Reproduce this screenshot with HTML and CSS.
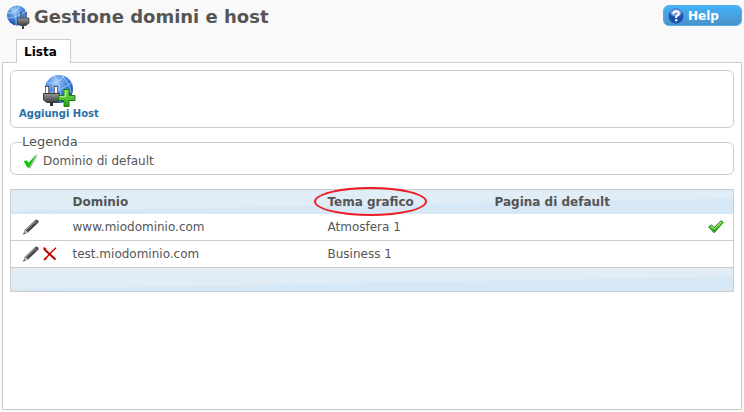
FILE: index.html
```html
<!DOCTYPE html>
<html lang="it">
<head>
  <meta charset="UTF-8">
  <title>Gestione domini e host</title>
  <meta name="viewport" content="width=device-width, initial-scale=1">
  <link rel="stylesheet" href="styles.css">
</head>
<body>
  <svg class="defs" width="0" height="0" aria-hidden="true">
    <defs>
      <radialGradient id="globe" cx="40%" cy="25%" r="80%">
        <stop offset="0" stop-color="#a9d0f8"/>
        <stop offset="0.45" stop-color="#4a8be0"/>
        <stop offset="1" stop-color="#123f98"/>
      </radialGradient>
      <linearGradient id="plug" x1="0" y1="0" x2="0" y2="1">
        <stop offset="0" stop-color="#989898"/>
        <stop offset="1" stop-color="#3c3c3c"/>
      </linearGradient>
      <linearGradient id="green" x1="0" y1="0" x2="0" y2="1">
        <stop offset="0" stop-color="#8be85c"/>
        <stop offset="1" stop-color="#1f9c12"/>
      </linearGradient>
      <linearGradient id="pen" x1="0" y1="0" x2="1" y2="1">
        <stop offset="0.3" stop-color="#8c8c8c"/>
        <stop offset="0.6" stop-color="#333"/>
      </linearGradient>
      <symbol id="icon-edit" viewBox="0 0 16 16">
        <path d="M0.3 15.4 L1.8 10.8 L11.5 1.4 Q13 0 14.8 1 Q16.2 2.2 15 4 L5.2 13.2 Z" fill="url(#pen)"/>
        <path d="M0.3 15.4 L1.8 10.8 L5.2 13.2 Z" fill="#b9b9b9"/>
        <path d="M0.3 15.4 L1 13.3 L2.4 14.5 Z" fill="#444"/>
        <path d="M3 11 L11.8 2.6" stroke="#bbb" stroke-width="0.8"/>
        <path d="M11 2.2 L14 4.8" stroke="#999" stroke-width="0.7"/>
      </symbol>
    </defs>
  </svg>

  <header class="header">
    <svg class="header-icon" width="24" height="24" viewBox="0 0 24 24" aria-hidden="true">
      <circle cx="10" cy="10.5" r="10" fill="url(#globe)"/>
      <path d="M1 8 Q8 9 13 1 M1 13 Q9 13 19 6 M4 3 Q10 10 9 20" fill="none" stroke="#c4e0fb" stroke-width="0.7"/>
      <path d="M14 8 V14 M19 7 V14" stroke="#c9dcf2" stroke-width="2.4"/>
      <path d="M14 7 V14 M19 7 V14" stroke="#1d3966" stroke-width="1.3"/>
      <path d="M10.5 13 H22 V18 L19 20.5 H13 L10.5 18 Z" fill="url(#plug)" stroke="#444" stroke-width="0.8"/>
      <path d="M16 20 V24" stroke="#444" stroke-width="2"/>
    </svg>
    <h1>Gestione domini e host</h1>
    <button class="help" type="button">
      <svg width="16" height="16" viewBox="0 0 16 16" aria-hidden="true">
        <circle cx="8" cy="8" r="7.5" fill="#1c50ae"/>
        <ellipse cx="8" cy="4.8" rx="5.8" ry="3.8" fill="#6f9be0"/>
        <path d="M5.3 6 Q5.5 3.3 8.2 3.3 Q11 3.5 10.8 5.8 Q10.6 7.2 8.2 8.3 V10" fill="none" stroke="#fff" stroke-width="2"/>
        <circle cx="8.2" cy="12.2" r="1.2" fill="#fff"/>
      </svg>
      Help
    </button>
  </header>

  <nav class="tabs">
    <a class="tab" href="#lista">Lista</a>
  </nav>

  <main class="panel" id="lista">
    <div class="toolbar">
      <a class="tool" href="#aggiungi">
        <svg width="34" height="34" viewBox="0 0 34 34" aria-hidden="true">
          <circle cx="17" cy="15" r="14" fill="url(#globe)"/>
          <path d="M5 9 Q16 11 22 2 M8 19 Q19 16 30 9 M12 2 Q20 11 18 28 M19 1 Q28 9 29 19" fill="none" stroke="#b9dafa" stroke-width="0.7"/>
          <path d="M5 12 V20 M14 12 V20" stroke="#555" stroke-width="4"/>
          <path d="M5 13 V20 M14 13 V20" stroke="#fff" stroke-width="2.4"/>
          <path d="M1.5 19.5 H17.5 V26 L14 28.5 H5 L1.5 26 Z" fill="url(#plug)" stroke="#3b3b3b"/>
          <path d="M9.5 28 V32" stroke="#333" stroke-width="3"/>
          <path d="M22 15.5 H27 V21.5 H33 V26.5 H27 V32.5 H22 V26.5 H16.5 V21.5 H22 Z" fill="url(#green)" stroke="#178310"/>
          <path d="M23.3 17 V22.8 H18" fill="none" stroke="#b9f596"/>
        </svg>
        Aggiungi Host
      </a>
    </div>

    <fieldset class="legend">
      <legend>Legenda</legend>
      <svg width="16" height="16" viewBox="0 0 16 16" aria-hidden="true">
        <path d="M2.2 9.2 L6 12.3 L14.2 2.6 L6.8 15.4 Z" fill="#aaa" stroke="#bbb"/>
        <path d="M0.8 8 L4 7.4 L5.6 9.8 L14 0.8 L6 14.4 H4.2 Z" fill="#0bc80b"/>
      </svg>
      <span class="legend-text">Dominio di default</span>
    </fieldset>

    <table class="grid">
      <colgroup>
        <col class="col-actions">
        <col class="col-domain">
        <col class="col-theme">
        <col>
        <col class="col-default">
      </colgroup>
      <thead>
        <tr>
          <th></th>
          <th>Dominio</th>
          <th><span class="marked">Tema grafico</span></th>
          <th>Pagina di default</th>
          <th></th>
        </tr>
      </thead>
      <tbody>
        <tr>
          <td>
            <div class="actions">
              <button type="button" aria-label="Modifica"><svg width="16" height="16"><use href="#icon-edit"/></svg></button>
            </div>
          </td>
          <td>www.miodominio.com</td>
          <td>Atmosfera 1</td>
          <td></td>
          <td>
            <svg class="check" width="16" height="14" viewBox="0 0 16 14" role="img" aria-label="Dominio di default">
              <path d="M0.7 7 L3.4 4.8 L6 7.6 L13 0.8 L15.3 2.4 L6.2 12.8 Z" fill="url(#green)" stroke="#267c20"/>
              <path d="M2.4 6.8 L3.5 6 L6 9 L13 2" fill="none" stroke="#a7f488" stroke-width="0.8"/>
            </svg>
          </td>
        </tr>
        <tr>
          <td>
            <div class="actions">
              <button type="button" aria-label="Modifica"><svg width="16" height="16"><use href="#icon-edit"/></svg></button>
              <button type="button" aria-label="Elimina">
                <svg width="14" height="14" viewBox="0 0 14 14">
                  <path d="M1 2 L12.5 12.5" stroke="#b00000" stroke-width="2"/>
                  <path d="M13 0.7 L8 5.5 L1.5 12.8" fill="none" stroke="#c80000" stroke-width="1.5"/>
                  <path d="M0.5 0.7 L3 2.5 M1 13 L3.5 10.5" stroke="#d61b00" stroke-width="2"/>
                </svg>
              </button>
            </div>
          </td>
          <td>test.miodominio.com</td>
          <td>Business 1</td>
          <td></td>
          <td></td>
        </tr>
      </tbody>
      <tfoot>
        <tr><td colspan="5"></td></tr>
      </tfoot>
    </table>
  </main>
</body>
</html>
```

FILE: styles.css
```css
* { box-sizing: border-box; }
body { display: flex; flex-direction: column; min-height: 100vh; margin: 0; padding: 0 2px 2px; background: #f9f9f9; color: #555; font-family: Verdana, "DejaVu Sans", sans-serif; font-size: 12px; line-height: 16px; }
svg { display: block; flex: none; }
.defs { position: absolute; }

.header { display: flex; align-items: flex-start; gap: 3px; height: 39px; padding: 5px 0 0 5px; }
h1 { flex: 1; margin: 0; font-size: 18px; line-height: 24px; }
.help { display: flex; align-items: center; gap: 4px; width: 79px; height: 21px; padding: 0 4px; border: 1px solid #50aeea; border-radius: 6px; background: linear-gradient(#45b0f8, #4a92c8); color: #fff; font: bold 12px/16px Verdana, "DejaVu Sans", sans-serif; cursor: pointer; }

.tabs { display: flex; padding-left: 14px; }
.tab { position: relative; z-index: 1; height: 24px; margin-bottom: -1px; padding: 4px 13px 0 7px; border: 1px solid #ccc; border-bottom: 0; background: #fff; color: #000; font-weight: bold; text-decoration: none; }

.panel { flex: 1; padding: 7px; border: 1px solid #ccc; background: #fff; }
.toolbar { display: flex; height: 58px; padding: 3px 8px; border: 1px solid #ccc; border-radius: 6px; }
.tool { display: flex; flex-direction: column; align-items: center; color: #2a6ea6; font-size: 10px; font-weight: bold; line-height: 12px; text-decoration: none; }

.legend { display: flex; align-items: center; gap: 4px; height: 40px; margin: 7px 0 14px; padding: 0 11px 0 12px; border: 1px solid #ccc; border-radius: 6px; }
.legend legend { margin-left: -1px; padding: 0; font-size: 13px; line-height: 14px; }
.legend svg, .legend-text { margin-bottom: 2px; }

.grid { width: 100%; border: 1px solid #ccc; border-collapse: collapse; table-layout: fixed; }
.col-actions { width: 57px; }
.col-domain { width: 255px; }
.col-theme { width: 167px; }
.col-default { width: 41px; }
.grid th, .grid td { height: 27px; padding: 0 5px; text-align: left; }
.grid th { height: 24px; }
.grid tbody td { border-bottom: 1px solid #ccc; }
.grid tbody td:first-child { padding-left: 12px; }
.grid thead, .grid tfoot { background: linear-gradient(179deg, #e0edf7 55%, #d6e8f5 60%); }
.grid tfoot td { height: 24px; }
.actions { display: flex; align-items: center; gap: 4px; }
.actions button { padding: 0; border: 0; background: none; cursor: pointer; }
.check { margin-left: 10px; }

.marked { position: relative; }
.marked::after { content: ""; position: absolute; inset: -8px -13px -7px -14px; border: 2px solid #ed1c24; border-radius: 50%; }

@media (max-width: 600px) {
  .grid { table-layout: auto; }
}
```
